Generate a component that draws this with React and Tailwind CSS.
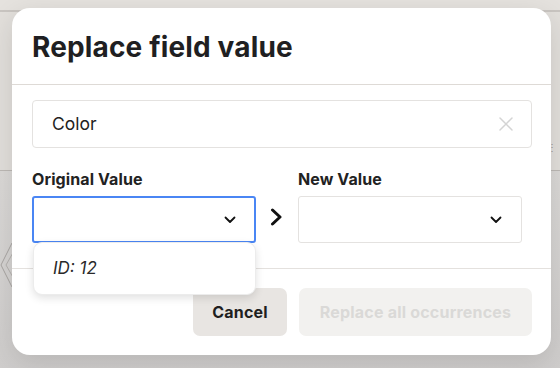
export default function App() {
  return (
    <div className="relative w-[560px] h-[368px] overflow-hidden bg-[#d3d1cf] font-['Inter',sans-serif]">
      {/* background page */}
      <div className="flex flex-col h-full">
        <div className="h-[10px] bg-[#e5e2de]" />
        <div className="h-[2px] bg-[#c9c5c1]" />
        <div className="h-[158px] bg-[#e2dfdb] flex items-start justify-end pr-[3px] pt-[130px]">
          <span className="text-[10px] leading-none text-[#9a9794]">⋮</span>
        </div>
        <div className="h-[1px] bg-[#bdb9b5]" />
        <div className="flex-1 bg-gradient-to-b from-[#dbd9d7] to-[#cfcdcc] pt-[70px]">
          <svg width="14" height="48" viewBox="0 0 14 48" className="block">
            <path d="M12 2 L1 24 L12 46" fill="none" stroke="#a8a5a2" strokeWidth="1" />
            <path d="M14 10 L6 24 L14 38" fill="none" stroke="#b5b2af" strokeWidth="1" />
          </svg>
        </div>
      </div>

      {/* modal */}
      <div className="absolute left-[12px] top-[8px] w-[539px] h-[347px] rounded-[18px] bg-white shadow-[0_8px_28px_rgba(0,0,0,0.12)] flex flex-col">
        <div className="h-[77px] flex items-center px-[20px] border-b border-[#dedad6]">
          <h1 className="text-[28px] font-bold text-[#1f1f22] tracking-[0.15px] pt-[1px]">Replace field value</h1>
        </div>

        <div className="h-[183px] px-[20px] pt-[15px] flex flex-col">
          <div className="h-[48px] w-[500px] rounded-[4px] border border-[#e4e2e0] flex items-center justify-between pl-[19px] pr-[18px]">
            <span className="text-[17.5px] text-[#222222]">Color</span>
            <svg width="14" height="14" viewBox="0 0 14 14">
              <path d="M1 1 L13 13 M13 1 L1 13" stroke="#d4d4d4" strokeWidth="1.5" strokeLinecap="round" />
            </svg>
          </div>

          <div className="flex mt-[20px]">
            <div className="w-[224px] flex flex-col">
              <label className="text-[16px] font-bold text-[#222222] tracking-[0.1px] leading-[22px] h-[28px]">Original Value</label>
              <div className="relative">
                <div className="h-[47px] rounded-[3px] border-2 border-[#4a86f4] flex items-center justify-end pr-[18px]">
                  <svg width="12" height="8" viewBox="0 0 12 8">
                    <path d="M1.5 1.5 L6 6 L10.5 1.5" fill="none" stroke="#111111" strokeWidth="1.8" strokeLinecap="round" strokeLinejoin="round" />
                  </svg>
                </div>
                <div className="absolute left-[1px] top-[46px] w-[223px] h-[53px] rounded-[9px] bg-white border border-[#ececec] shadow-[0_3px_8px_rgba(0,0,0,0.12)] z-10 flex items-center pl-[19px]">
                  <span className="text-[17px] italic text-[#2a2a2a]">ID: 12</span>
                </div>
              </div>
            </div>
            <div className="w-[42px] flex items-end justify-center pb-[17px] pr-[2px]">
              <svg width="13" height="18" viewBox="0 0 13 18">
                <path d="M2.5 2 L10 9 L2.5 16" fill="none" stroke="#111111" strokeWidth="3" strokeLinecap="round" strokeLinejoin="round" />
              </svg>
            </div>
            <div className="w-[224px] flex flex-col">
              <label className="text-[16px] font-bold text-[#222222] tracking-[0.1px] leading-[22px] h-[28px]">New Value</label>
              <div className="h-[47px] rounded-[3px] border border-[#e4e2e0] flex items-center justify-end pr-[19px]">
                <svg width="12" height="8" viewBox="0 0 12 8">
                  <path d="M1.5 1.5 L6 6 L10.5 1.5" fill="none" stroke="#111111" strokeWidth="1.8" strokeLinecap="round" strokeLinejoin="round" />
                </svg>
              </div>
            </div>
          </div>
        </div>

        <div className="border-t border-[#e4e1de] flex-1 flex justify-end items-start gap-[12px] pt-[19px] pr-[19px]">
          <button className="h-[48px] w-[94px] rounded-[7px] bg-[#e8e5e2] text-[16px] font-bold tracking-[0.2px] text-[#1f1f1f]">Cancel</button>
          <button className="h-[48px] w-[233px] rounded-[7px] bg-[#f2f1ef] text-[16px] font-bold tracking-[0.2px] text-[#dad9d7]">Replace all occurrences</button>
        </div>
      </div>
    </div>
  );
}
